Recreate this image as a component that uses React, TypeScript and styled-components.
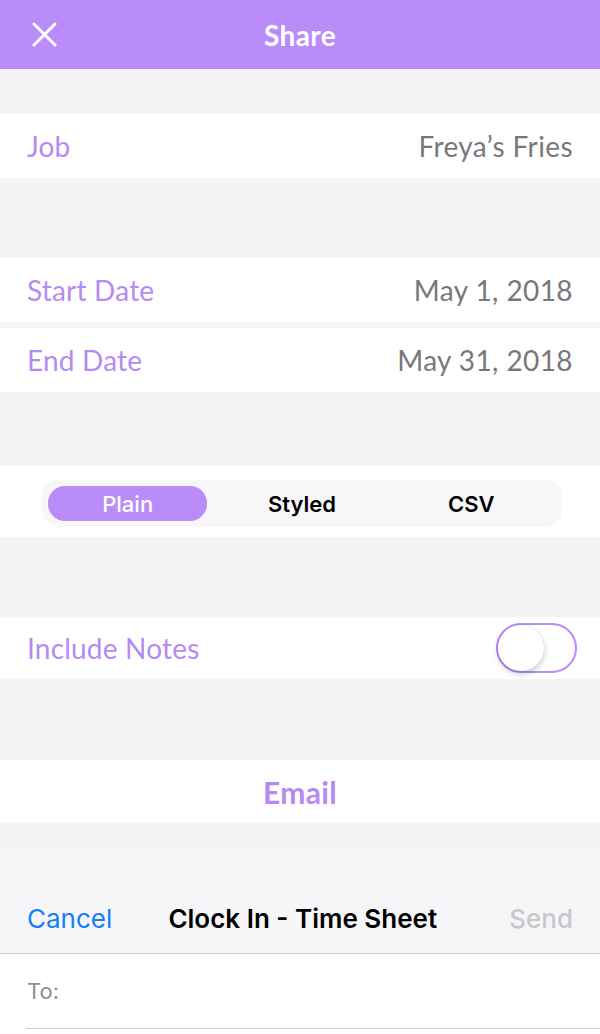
import React, {useState} from 'react';
import styled, {createGlobalStyle} from 'styled-components';

const PURPLE = '#b98cf9';
const TEXT_PURPLE = '#b68af4';
const PAGE_GRAY = '#f4f3f6';
const VALUE_GRAY = '#78777c';
const APP_FONT = "Lato, 'Noto Sans', sans-serif";
const SYS_FONT = "Inter, Roboto, 'Liberation Sans', sans-serif";

const GlobalStyle = createGlobalStyle`
  html, body {
    margin: 0;
    padding: 0;
    background: ${PAGE_GRAY};
  }
  * {
    box-sizing: border-box;
  }
`;

type Format = 'Plain' | 'Styled' | 'CSV';
const FORMATS: Format[] = ['Plain', 'Styled', 'CSV'];

const CloseIcon = () => (
  <svg width="26" height="26" viewBox="0 0 26 26">
    <path
      d="M3 2 L24 23 M24 2 L3 23"
      stroke="#fff"
      strokeWidth="3"
      strokeLinecap="round"
    />
  </svg>
);

export default function App() {
  const [format, setFormat] = useState<Format>('Plain');
  const [includeNotes, setIncludeNotes] = useState(false);

  return (
    <Page>
      <GlobalStyle />
      <Header>
        <CloseButton aria-label="Close">
          <CloseIcon />
        </CloseButton>
        <HeaderTitle>Share</HeaderTitle>
      </Header>

      <Spacer $h={45} />
      <Row>
        <Label>Job</Label>
        <Value>Freya’s Fries</Value>
      </Row>

      <Spacer $h={80} />
      <Row>
        <Label>Start Date</Label>
        <Value>May 1, 2018</Value>
      </Row>
      <Spacer $h={6} />
      <Row>
        <Label>End Date</Label>
        <Value>May 31, 2018</Value>
      </Row>

      <Spacer $h={74} />
      <SegmentRow>
        <Segmented>
          {FORMATS.map((f) => (
            <SegmentButton
              key={f}
              $active={f === format}
              onClick={() => setFormat(f)}
            >
              {f}
            </SegmentButton>
          ))}
        </Segmented>
      </SegmentRow>

      <Spacer $h={80} />
      <Row $h={62}>
        <Label>Include Notes</Label>
        <Toggle
          $on={includeNotes}
          onClick={() => setIncludeNotes((v) => !v)}
          aria-label="Include Notes"
        >
          <Knob $on={includeNotes} />
        </Toggle>
      </Row>

      <Spacer $h={81} />
      <ActionRow $h={63}>
        <ActionText>Email</ActionText>
      </ActionRow>

      <Sheet>
        <SheetNav>
          <NavCancel>Cancel</NavCancel>
          <NavTitle>Clock In - Time Sheet</NavTitle>
          <NavSend>Send</NavSend>
        </SheetNav>
        <ToRow>
          <ToField>
            <ToLabel>To:</ToLabel>
          </ToField>
        </ToRow>
      </Sheet>
    </Page>
  );
}

const Page = styled.div`
  width: 600px;
  min-height: 1034px;
  display: flex;
  flex-direction: column;
  background: ${PAGE_GRAY};
  overflow: hidden;
`;

const Header = styled.header`
  height: 69px;
  background: ${PURPLE};
  display: flex;
  align-items: center;
  justify-content: center;
  position: relative;
`;

const CloseButton = styled.button`
  position: absolute;
  left: 31px;
  top: 22px;
  border: 0;
  padding: 0;
  background: none;
  display: flex;
`;

const HeaderTitle = styled.h1`
  margin: 0;
  color: #fff;
  font-family: ${APP_FONT};
  font-weight: 700;
  font-size: 28px;
  letter-spacing: 0.4px;
`;

const Spacer = styled.div<{$h: number}>`
  height: ${(p) => p.$h}px;
  flex-shrink: 0;
`;

const Row = styled.div<{$h?: number}>`
  height: ${(p) => p.$h ?? 64}px;
  background: #fff;
  display: flex;
  align-items: center;
  justify-content: space-between;
  padding: 0 27px 0 27px;
  flex-shrink: 0;
`;

const Label = styled.span`
  color: ${TEXT_PURPLE};
  font-family: ${APP_FONT};
  font-size: 28px;
  letter-spacing: 0.2px;
`;

const Value = styled.span`
  color: ${VALUE_GRAY};
  font-family: ${APP_FONT};
  font-size: 28px;
  letter-spacing: 0.4px;
`;

const SegmentRow = styled.div`
  height: 71px;
  background: #fff;
  display: flex;
  align-items: center;
  justify-content: center;
  padding: 4px 0 0 4px;
`;

const Segmented = styled.div`
  width: 520px;
  height: 47px;
  border-radius: 17px;
  background: #f7f6f9;
  display: grid;
  grid-template-columns: repeat(3, 1fr);
  align-items: center;
  padding: 0 6px;
`;

const SegmentButton = styled.button<{$active: boolean}>`
  height: 35px;
  margin-right: ${(p) => (p.$active ? '10px' : '0')};
  border: 0;
  border-radius: 17px;
  background: ${(p) => (p.$active ? PURPLE : 'transparent')};
  color: ${(p) => (p.$active ? '#fff' : '#000')};
  font-family: ${SYS_FONT};
  font-weight: ${(p) => (p.$active ? 500 : 600)};
  font-size: 22px;
  padding: 0;
  cursor: pointer;
`;

const Toggle = styled.button<{$on: boolean}>`
  width: 81px;
  height: 50px;
  border-radius: 25px;
  border: 2px solid ${PURPLE};
  background: ${(p) => (p.$on ? PURPLE : '#fff')};
  padding: 0;
  position: relative;
  margin-right: -4px;
`;

const Knob = styled.span<{$on: boolean}>`
  position: absolute;
  top: 0;
  left: ${(p) => (p.$on ? '31px' : '0')};
  width: 46px;
  height: 46px;
  border-radius: 50%;
  background: #fff;
  box-shadow: 0 3px 6px rgba(0, 0, 0, 0.2), 0 0 1px rgba(0, 0, 0, 0.2);
`;

const ActionRow = styled(Row)`
  justify-content: center;
`;

const ActionText = styled.span`
  color: ${TEXT_PURPLE};
  font-family: ${APP_FONT};
  font-weight: 700;
  font-size: 30px;
  letter-spacing: 0.3px;
`;

const Sheet = styled.div`
  margin-top: 30px;
  display: flex;
  flex-direction: column;
`;

const SheetNav = styled.div`
  height: 101px;
  background: #f6f6f8;
  border-bottom: 1px solid #c8c7cc;
  display: flex;
  align-items: flex-end;
  justify-content: space-between;
  padding: 0 27px 19px 27px;
  font-family: ${SYS_FONT};
  font-size: 26px;
`;

const NavCancel = styled.span`
  color: #147efb;
`;

const NavTitle = styled.span`
  color: #000;
  font-weight: 600;
  margin-right: 16px;
`;

const NavSend = styled.span`
  color: #c7c7cc;
  font-weight: 500;
`;

const ToRow = styled.div`
  background: #fff;
  padding-left: 26px;
  padding-bottom: 20px;
`;

const ToField = styled.div`
  height: 75px;
  border-bottom: 1px solid #d0d0d4;
  display: flex;
  align-items: center;
  padding-left: 1px;
`;

const ToLabel = styled.span`
  font-family: ${SYS_FONT};
  color: #8e8e93;
  font-size: 22px;
`;
